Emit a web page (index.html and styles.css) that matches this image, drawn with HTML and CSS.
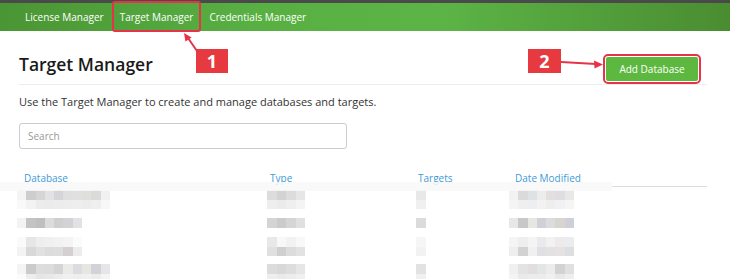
FILE: index.html
```html
<!DOCTYPE html>
<html lang="en">
<head>
    <meta charset="UTF-8">
    <title>Target Manager</title>
    <link rel="stylesheet" href="styles.css">
</head>
<body>
    <div class="topbar"></div>
    <nav class="nav">
        <a class="nav-item">License Manager</a>
        <a class="nav-item active">Target Manager</a>
        <a class="nav-item">Credentials Manager</a>
    </nav>

    <main class="content">
        <div class="page-header">
            <h1 class="title">Target Manager</h1>
            <button class="btn-add">Add Database</button>
        </div>
        <p class="intro">Use the Target Manager to create and manage databases and targets.</p>
        <input class="search" type="text" placeholder="Search">

        <div class="table">
            <div class="thead">
                <span class="th th-db">Database</span>
                <span class="th th-type">Type</span>
                <span class="th th-targets">Targets</span>
                <span class="th th-date">Date Modified</span>
            </div>
            <div class="tbody" id="rows"></div>
        </div>
    </main>

    <!-- annotations -->
    <div class="callout callout-1">1</div>
    <div class="callout callout-2">2</div>
    <svg class="arrows" width="730" height="279" viewBox="0 0 730 279">
        <line x1="197" y1="51" x2="188" y2="38" stroke="#e6334a" stroke-width="2"/>
        <polygon points="184,33 191.6,37.4 185.4,41.6" fill="#e6334a"/>
        <line x1="561" y1="62" x2="596" y2="64" stroke="#e6334a" stroke-width="2"/>
        <polygon points="603,64.5 594,60.5 594.5,68.5" fill="#e6334a"/>
    </svg>

    <script>
        // blurred table rows (pixelated in the screenshot)
        const heights = [10, 9, 9, 10, 9, 10, 9, 8, 10, 9];
        const widths = [9.3, 9.5, 10, 9.3];
        const strips = [
            [
                ['#f4f4f4','#cdcdcd','#d5d5d5','#e2e2e2','#d6d4d8','#dfdfdf','#e0e0e0','#dfdfdc','#dadada','#f1f1f1'],
                ['#dcdcdc','#d3d3d3','#dcdcdc','#e6e6e6'],
                ['#e8e8e8'],
                ['#f2f2f2','#dcd9da','#dfe2e2','#ececec','#e3dfe0','#dedde2','#e8e8e6']
            ],
            [
                ['#f9f9f9','#f3f3f3','#ececec','#ebebeb','#ececec','#ededed','#eeeeee','#ececec','#efefef','#f7f7f7'],
                ['#eeeeee','#ebebeb','#efefef','#f4f4f4'],
                ['#f0f0f0'],
                ['#f4f4f4','#efefef','#eeeef0','#f2f2f2','#eeeeee','#f0f2f2','#f5f5f5']
            ],
            [[], [], [], []],
            [
                ['#f3f3f3','#c4c4c4','#bfbfbf','#dcdcdc','#cfcfcf','#d5d2d7','#e2e2e2'],
                ['#d4d4d4','#cccaca','#d6d4d4','#dfe1e1'],
                ['#dcdadc'],
                ['#e8e6e6','#c8c8ca','#e6e6e2','#d0d0d6','#dcdcdc','#d8d4d0','#cdd0d6']
            ],
            [[], [], [], []],
            [
                ['#fafafa','#e6e6e6','#eeeeee','#f0f0f0','#f2f2f2','#f4f4f4','#fbfbfb'],
                ['#e8e8e8','#f8f8f8','#f2f2f2','#f8f8f8'],
                ['#f6f6f6'],
                ['#f4f4f4','#eeeef0','#f4f4f4','#eaeaec','#f2f2f2','#eceaea','#eaecee']
            ],
            [
                ['#f3f3f3','#d8d8d8','#e1e1e1','#dcdcdc','#dddddd','#d3cfd3','#ececec'],
                ['#e0e0e0','#cfcfcf','#dcdcdc','#e2e2e2'],
                ['#f2f2f2'],
                ['#eeeeee','#d2d2d2','#f0f0f0','#e0e0e2','#e2e2e2','#e4e2e2','#dcdee2']
            ],
            [[], [], [], []],
            [
                ['#f4f4f4','#cbcbcb','#dddddd','#dcdcdc','#d4d4d4','#eaeae6','#dcdce0','#e6e6e3','#d4d2d8','#e6e6ea'],
                ['#dcdcdc','#d8d8d8','#dddddd','#e6e6e8'],
                ['#e2e2e4'],
                ['#f0f0f0','#e2e4e4','#e2dee0','#e2e6e6','#ececec','#d2d2d2','#e0e0e0']
            ],
            [
                ['#fbfbfb','#ededed','#e6e6e6','#e8e8e8','#ececec','#f0f0f0','#eeeeee','#f0f0f0','#ececec','#f4f4f4'],
                ['#eeeeee','#eaeaea','#ececec','#f0f0f0'],
                ['#f0f0f0'],
                ['#f4f4f4','#eaeaea','#ececec','#ececec','#f0f0f0','#e8e8e8','#eeeeee']
            ]
        ];

        const rows = document.getElementById('rows');
        strips.forEach((strip, i) => {
            const row = document.createElement('div');
            row.className = 'strip';
            row.style.height = heights[i] + 'px';
            strip.forEach((cells, c) => {
                const col = document.createElement('div');
                col.className = 'strip-col';
                cells.forEach(color => {
                    const px = document.createElement('span');
                    px.className = 'px';
                    px.style.width = widths[c] + 'px';
                    px.style.background = color;
                    col.appendChild(px);
                });
                row.appendChild(col);
            });
            rows.appendChild(row);
        });
    </script>
</body>
</html>
```

FILE: styles.css
```css
:root {
    --green: #5cb83f;
    --red: #e6334a;
    --badge-red: #e63a40;
    --link-blue: #3f9ad6;
    --text: #333333;
}

body {
    margin: 0;
    font-family: 'Open Sans', 'Noto Sans', sans-serif;
    color: var(--text);
    background: #ffffff;
    overflow: hidden;
}

.topbar {
    height: 3px;
    background: #4a4a4a;
}

.nav {
    height: 28px;
    display: flex;
    padding-left: 17px;
    background: linear-gradient(90deg, #4a9534 0%, #58b043 35%, #5cb446 60%, #4a8d31 100%);
}

.nav-item {
    position: relative;
    padding: 0 8px;
    line-height: 28px;
    font-size: 10px;
    color: #ffffff;
    cursor: pointer;
}

.nav-item.active::after {
    content: '';
    position: absolute;
    top: -2px;
    bottom: -1px;
    left: 0;
    right: 0;
    border: 2px solid var(--red);
    border-radius: 3px;
}

.content {
    padding: 0 23px 0 19px;
}

.page-header {
    display: flex;
    justify-content: space-between;
    align-items: flex-start;
    margin-top: 26px;
    padding: 0 9px 3px 0;
    border-bottom: 1px solid #eeeeee;
}

.title {
    margin: -3px 0 0;
    font-size: 17.5px;
    line-height: 20px;
    font-weight: 600;
    color: #1a1a1a;
}

.btn-add {
    height: 24px;
    width: 92px;
    padding: 0;
    border: none;
    border-radius: 2px;
    background: var(--green);
    color: #ffffff;
    font-family: inherit;
    font-size: 10px;
    outline: 2px solid var(--red);
    outline-offset: 1px;
}

.intro {
    margin: 8px 0 0;
    font-size: 11px;
    line-height: 18px;
}

.search {
    display: block;
    box-sizing: border-box;
    width: 328px;
    height: 26px;
    margin-top: 12px;
    padding: 0 8px;
    border: 1px solid #cccccc;
    border-radius: 3px;
    font-family: inherit;
    font-size: 10px;
}

.search::placeholder {
    color: #999999;
}

.table {
    margin: 21px 0 0 -2px;
}

.thead,
.strip {
    display: grid;
    grid-template-columns: 250px 149px 93px 1fr;
}

.thead {
    position: relative;
    height: 20px;
}

.thead::before {
    content: '';
    position: absolute;
    left: -17px;
    top: 12px;
    width: 612px;
    height: 9px;
    background: rgba(248, 248, 248, 0.85);
}

.thead::after {
    content: '';
    position: absolute;
    left: 595px;
    top: 16px;
    width: 95px;
    height: 1px;
    background: #dddddd;
}

.th {
    font-size: 10px;
    line-height: 16px;
    color: var(--link-blue);
}

.th-db { padding-left: 7px; }
.th-type { padding-left: 3px; }
.th-targets { padding-left: 2px; }
.th-date { padding-left: 6px; }

.strip-col {
    display: flex;
}

.px {
    display: block;
    height: 100%;
}

.callout {
    position: absolute;
    width: 32px;
    height: 24px;
    background: var(--badge-red);
    color: #ffffff;
    font-weight: 700;
    font-size: 18px;
    line-height: 24px;
    text-align: center;
}

.callout-1 {
    left: 196px;
    top: 49px;
}

.callout-2 {
    left: 528px;
    top: 49px;
    width: 33px;
}

.arrows {
    position: absolute;
    top: 0;
    left: 0;
    pointer-events: none;
}
```
